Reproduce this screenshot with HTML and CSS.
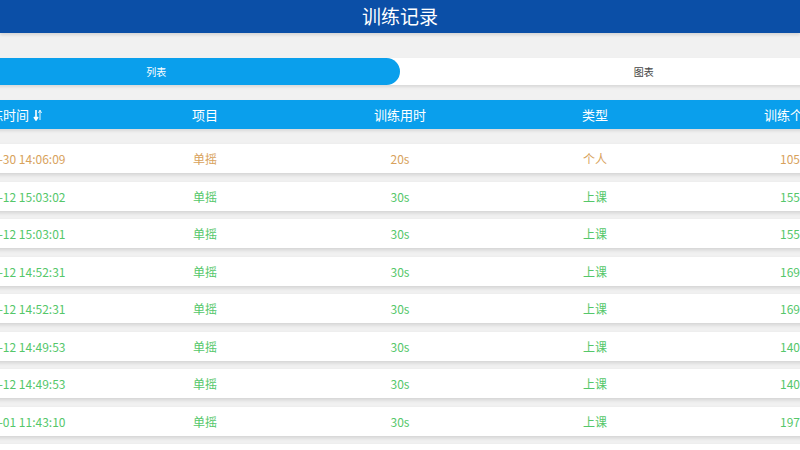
FILE: index.html
```html
<!DOCTYPE html>
<html lang="zh-CN">
<head>
    <meta charset="UTF-8">
    <meta name="viewport" content="width=device-width, initial-scale=1.0">
    <title>训练记录</title>
    <link rel="stylesheet" href="styles.css">
</head>
<body>
    <div class="topbar">训练记录</div>

    <div class="page">
        <div class="content">
            <div class="tabs">
                <div class="tab active">列表</div>
                <div class="tab">图表</div>
            </div>

            <div class="thead">
                <div class="cell">训练时间
                    <svg class="sort" width="10" height="12" viewBox="0 0 10 12">
                        <path d="M3 1 V10 M1 8 L3 11 L5 8" stroke="#fff" stroke-width="1.6" fill="none"/>
                        <path d="M7 11 V2 M5.5 4 L7 1 L8.5 4" stroke="#fff" stroke-width="0.9" fill="none"/>
                    </svg>
                </div>
                <div class="cell">项目</div>
                <div class="cell">训练用时</div>
                <div class="cell">类型</div>
                <div class="cell">训练个数</div>
            </div>

            <div class="list">
                <div class="row personal">
                    <div class="cell">2020-04-30 14:06:09</div>
                    <div class="cell">单摇</div>
                    <div class="cell">20s</div>
                    <div class="cell">个人</div>
                    <div class="cell">105</div>
                </div>
                <div class="row">
                    <div class="cell">2020-03-12 15:03:02</div>
                    <div class="cell">单摇</div>
                    <div class="cell">30s</div>
                    <div class="cell">上课</div>
                    <div class="cell">155</div>
                </div>
                <div class="row">
                    <div class="cell">2020-03-12 15:03:01</div>
                    <div class="cell">单摇</div>
                    <div class="cell">30s</div>
                    <div class="cell">上课</div>
                    <div class="cell">155</div>
                </div>
                <div class="row">
                    <div class="cell">2020-03-12 14:52:31</div>
                    <div class="cell">单摇</div>
                    <div class="cell">30s</div>
                    <div class="cell">上课</div>
                    <div class="cell">169</div>
                </div>
                <div class="row">
                    <div class="cell">2020-03-12 14:52:31</div>
                    <div class="cell">单摇</div>
                    <div class="cell">30s</div>
                    <div class="cell">上课</div>
                    <div class="cell">169</div>
                </div>
                <div class="row">
                    <div class="cell">2020-03-12 14:49:53</div>
                    <div class="cell">单摇</div>
                    <div class="cell">30s</div>
                    <div class="cell">上课</div>
                    <div class="cell">140</div>
                </div>
                <div class="row">
                    <div class="cell">2020-03-12 14:49:53</div>
                    <div class="cell">单摇</div>
                    <div class="cell">30s</div>
                    <div class="cell">上课</div>
                    <div class="cell">140</div>
                </div>
                <div class="row">
                    <div class="cell">2020-03-01 11:43:10</div>
                    <div class="cell">单摇</div>
                    <div class="cell">30s</div>
                    <div class="cell">上课</div>
                    <div class="cell">197</div>
                </div>
                <div class="row">
                    <div class="cell">2020-02-28 10:20:45</div>
                    <div class="cell">单摇</div>
                    <div class="cell">30s</div>
                    <div class="cell">上课</div>
                    <div class="cell">180</div>
                </div>
            </div>
        </div>
    </div>
</body>
</html>
```

FILE: styles.css
```css
body {
    margin: 0;
    background-color: #f1f1f1;
    font-family: "Noto Sans CJK SC", "Noto Sans", sans-serif;
    overflow: hidden;
    height: 450px;
}
.topbar {
    height: 33px;
    line-height: 32px;
    background: #0b4fa7;
    color: #fff;
    font-size: 19px;
    text-align: center;
    box-shadow: 0 2px 3px rgba(0, 0, 0, 0.12);
    position: relative;
}
.page {
    display: flex;
    justify-content: center;
}
.content {
    flex: 0 0 975px;
    width: 975px;
    padding-top: 25px;
}
.tabs {
    display: flex;
    height: 27px;
    background: #fff;
    border-radius: 14px;
    box-shadow: 0 2px 3px rgba(0, 0, 0, 0.1);
}
.tab {
    flex: 1;
    text-align: center;
    line-height: 27px;
    font-size: 10px;
    color: #444;
}
.tab.active {
    background: #0a9fec;
    color: #fff;
    border-radius: 14px;
}
.thead {
    display: flex;
    margin-top: 15px;
    height: 29px;
    background: #0a9fec;
    color: #fff;
    font-size: 13px;
    box-shadow: 0 2px 3px rgba(0, 0, 0, 0.1);
}
.cell {
    flex: 1;
    display: flex;
    align-items: center;
    justify-content: center;
    gap: 4px;
}
.sort {
    margin-top: 1px;
}
.list {
    padding-top: 15px;
}
.row {
    display: flex;
    height: 29px;
    margin-bottom: 8.5px;
    background: #fff;
    color: #55c76a;
    font-size: 12px;
    box-shadow: 0 2px 4px rgba(0, 0, 0, 0.13);
}
.row.personal {
    color: #d8a25c;
}
```
